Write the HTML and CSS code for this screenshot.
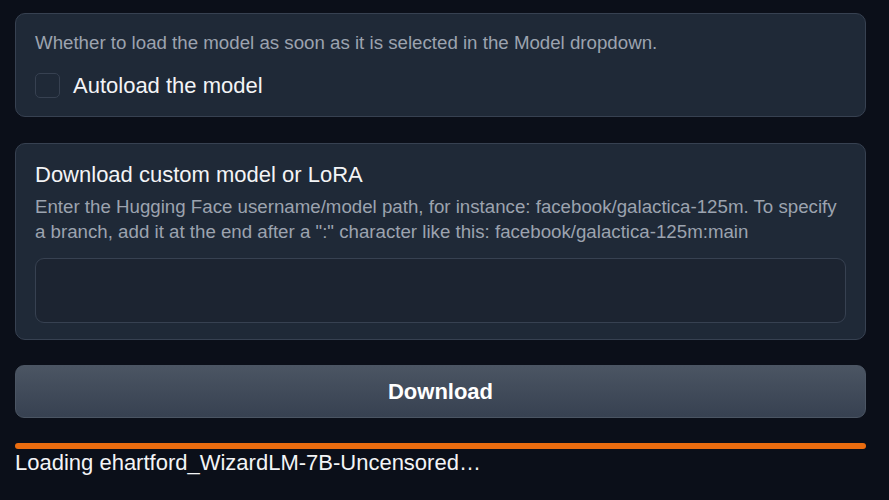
FILE: index.html
```html
<!DOCTYPE html>
<html>
<head>
<meta charset="utf-8">
<link rel="stylesheet" href="styles.css">
</head>
<body>
<div class="page">
  <div class="card card-auto">
    <div class="info">Whether to load the model as soon as it is selected in the Model dropdown.</div>
    <label class="check-row">
      <span class="checkbox"></span>
      <span class="check-label">Autoload the model</span>
    </label>
  </div>
  <div class="card card-dl">
    <div class="title">Download custom model or LoRA</div>
    <div class="info info-multi">Enter the Hugging Face username/model path, for instance: facebook/galactica-125m. To specify a branch, add it at the end after a ":" character like this: facebook/galactica-125m:main</div>
    <div class="textbox"></div>
  </div>
  <button class="btn">Download</button>
  <div class="progress"></div>
  <div class="status">Loading ehartford_WizardLM-7B-Uncensored…</div>
</div>
</body>
</html>
```
FILE: styles.css
```css
html, body {
  margin: 0;
  padding: 0;
  background: #0b0f19;
  font-family: "Liberation Sans", Arial, sans-serif;
  color: #e5e7eb;
}
.page {
  display: flex;
  flex-direction: column;
  padding: 13px 23px 0 15px;
}
.card {
  background: #1f2937;
  border: 1px solid #374151;
  border-radius: 10px;
  box-sizing: border-box;
}
.card-auto {
  height: 104px;
  padding: 18px 19px 0 19px;
}
.info {
  font-size: 18.7px;
  line-height: 22px;
  color: #9ca3af;
}
.check-row {
  display: flex;
  align-items: center;
  gap: 13px;
  height: 25px;
  margin-top: 19px;
}
.checkbox {
  width: 25px;
  height: 25px;
  box-sizing: border-box;
  border: 1px solid #374151;
  border-radius: 5px;
  background: #1f2937;
}
.check-label {
  font-size: 22px;
  line-height: 25px;
  color: #f3f4f6;
}
.card-dl {
  margin-top: 26px;
  height: 197px;
  padding: 18px 19px 0 19px;
}
.title {
  font-size: 22px;
  line-height: 26px;
  color: #f3f4f6;
}
.info-multi {
  margin-top: 6px;
  line-height: 25px;
}
.textbox {
  margin-top: 14px;
  height: 65px;
  box-sizing: border-box;
  border: 1px solid #374151;
  border-radius: 9px;
  background: #1c2431;
}
.btn {
  margin-top: 25px;
  height: 53px;
  border: 1px solid #4b5563;
  border-radius: 9px;
  background: linear-gradient(to bottom, #4b5563, #374151);
  color: #ffffff;
  font-family: "Liberation Sans", Arial, sans-serif;
  font-weight: bold;
  font-size: 22px;
  padding: 0;
}
.progress {
  margin-top: 25px;
  height: 6px;
  border-radius: 3px;
  background: #ea6c0f;
}
.status {
  margin-top: 1px;
  font-size: 22px;
  line-height: 26px;
  color: #f3f4f6;
  white-space: nowrap;
}
```
